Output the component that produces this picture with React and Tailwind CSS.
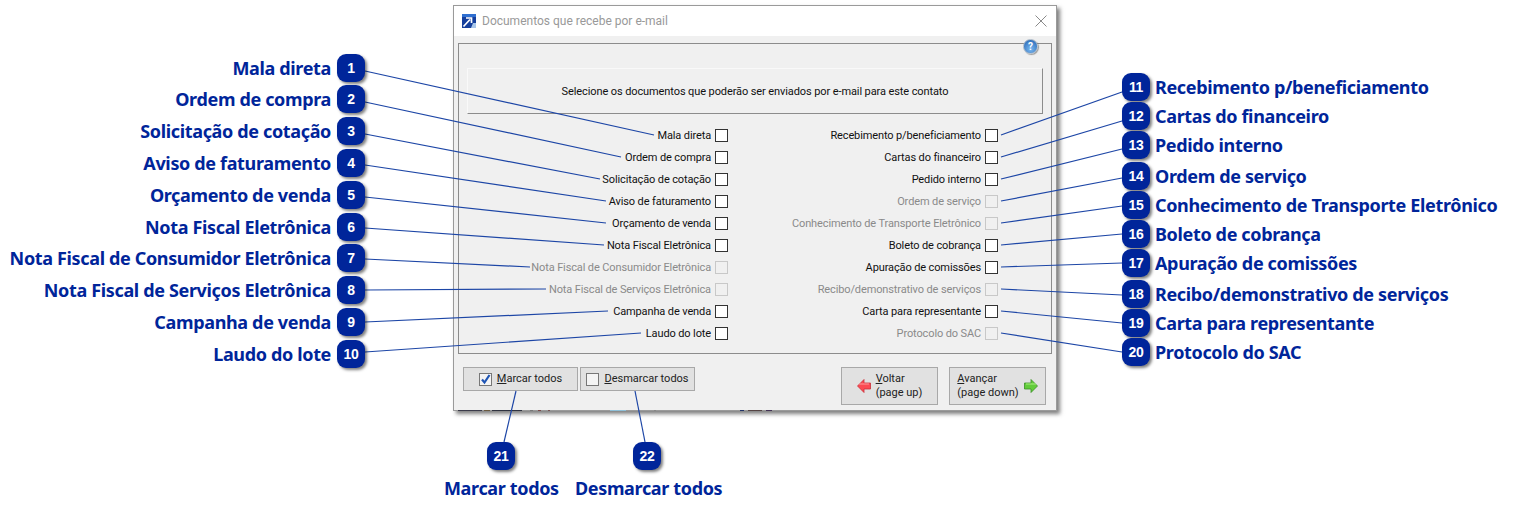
const leftCol = [
  { label: 'Mala direta' },
  { label: 'Ordem de compra' },
  { label: 'Solicitação de cotação' },
  { label: 'Aviso de faturamento' },
  { label: 'Orçamento de venda' },
  { label: 'Nota Fiscal Eletrônica' },
  { label: 'Nota Fiscal de Consumidor Eletrônica', disabled: true },
  { label: 'Nota Fiscal de Serviços Eletrônica', disabled: true },
  { label: 'Campanha de venda' },
  { label: 'Laudo do lote' },
]

const rightCol = [
  { label: 'Recebimento p/beneficiamento' },
  { label: 'Cartas do financeiro' },
  { label: 'Pedido interno' },
  { label: 'Ordem de serviço', disabled: true },
  { label: 'Conhecimento de Transporte Eletrônico', disabled: true },
  { label: 'Boleto de cobrança' },
  { label: 'Apuração de comissões' },
  { label: 'Recibo/demonstrativo de serviços', disabled: true },
  { label: 'Carta para representante' },
  { label: 'Protocolo do SAC', disabled: true },
]

// callout centers, read off the picture
const leftY = [68, 99, 131, 163, 195, 227, 258, 290, 322, 354]
const rightY = [87, 116, 145, 176, 205, 234, 263, 294, 323, 352]

const lines = [
  [365, 71, 654, 135], [365, 102, 621, 157], [365, 134, 600, 179], [365, 165, 606, 201], [365, 197, 606, 223],
  [365, 228, 604, 245], [365, 259, 530, 267], [365, 290, 546, 289], [365, 322, 608, 311], [365, 352, 641, 333],
  [1001, 135, 1122, 92], [1001, 157, 1122, 121], [1001, 179, 1122, 149], [1001, 201, 1122, 178], [1001, 223, 1122, 206],
  [1001, 245, 1122, 234], [1001, 267, 1122, 263], [1001, 289, 1122, 295], [1001, 311, 1122, 323], [1001, 333, 1122, 352],
  [516, 391, 504, 442], [635, 391, 645, 442],
]

// bits of the window behind the dialog that peek out under its lower edge
const behind = [
  [458, 24, '#3a3a4a'], [484, 6, '#6a5a40'], [492, 30, '#2f3340'], [530, 3, '#777'], [538, 3, '#7a4a4a'], [548, 2, '#775555'],
  [610, 16, '#8fc0d8'], [654, 2, '#888'], [740, 4, '#223366'], [748, 14, '#554444'], [766, 6, '#443355'],
]

function Badge({ n, className }) {
  return (
    <div className={`absolute w-7 h-7 rounded-[9px] bg-[#00259a] text-white flex items-center justify-center text-[14px] font-bold font-['Liberation_Sans',sans-serif] tracking-[-0.3px] shadow-[2px_2px_3px_rgba(0,0,0,0.5)] ${className}`}>
      {n}
    </div>
  )
}

function Row({ label, disabled }) {
  return (
    <div className="h-[22px] flex items-center justify-end gap-[4px]">
      <span className={`pt-[2px] tracking-[-0.12px] ${disabled ? 'text-[#8a8a8a]' : 'text-[#111]'}`}>{label}</span>
      <span className={`w-[13px] h-[13px] border ${disabled ? 'border-[#c8c8c8] bg-[#f0f0f0]' : 'border-[#333] bg-white'}`} />
    </div>
  )
}

function Arrow({ dir }) {
  const fill = dir === 'left' ? '#fb4a52' : '#62cc3a'
  const light = dir === 'left' ? '#ff9a9a' : '#a8ec80'
  const d = dir === 'left' ? 'M0.5 7 L7 0.5 V4 H13.5 V10 H7 V13.5 Z' : 'M13.5 7 L7 0.5 V4 H0.5 V10 H7 V13.5 Z'
  return (
    <svg width="14" height="14" viewBox="0 0 14 14" className="shrink-0">
      <path d={d} fill={fill} stroke={dir === 'left' ? '#c9303a' : '#3a8f26'} strokeWidth="0.8" />
      <path d="M2 5 H12" stroke={light} strokeWidth="1" />
    </svg>
  )
}

export default function App() {
  return (
    <div className="relative w-[1513px] h-[517px] bg-white overflow-hidden font-['Noto_Sans',sans-serif]">
      {/* dialog */}
      <div className="absolute left-[453px] top-[5px] w-[604px] h-[406px] border border-[#9a9a9a] bg-[#f0f0f0] shadow-[3px_3px_4px_rgba(0,0,0,0.5)] text-[11px] font-['Roboto',sans-serif] flex flex-col">
        <div className="h-[30px] bg-white flex items-center pl-[8px] pr-[9px] shrink-0">
          <svg width="14" height="14" viewBox="0 0 14 14" className="shrink-0">
            <rect width="14" height="14" fill="#153f9c" />
            <path d="M0 0 H14 V3 H0 Z" fill="#2f6fd0" />
            <path d="M1.5 12.5 L8 5.5 M4 4 H9.5 V9" stroke="#fff" strokeWidth="1.7" fill="none" />
            <path d="M9 14 L11 9 L14 9 V14 Z" fill="#a8c6ea" />
          </svg>
          <span className="ml-[6px] text-[12px] text-[#999]">Documentos que recebe por e-mail</span>
          <svg width="12" height="12" viewBox="0 0 12 12" className="ml-auto shrink-0">
            <path d="M0.5 0.5 L11.5 11.5 M11.5 0.5 L0.5 11.5" stroke="#8a8a8a" strokeWidth="1" />
          </svg>
        </div>

        <div className="relative mt-[7px] mx-[4px] h-[311px] border border-[#8c8c8c] px-[8px] pt-[24px]">
          <div className="absolute right-[13px] top-[-5px] w-[15px] h-[15px] rounded-full bg-[radial-gradient(circle_at_50%_70%,#7ab8f0,#1f5fb0)] border border-[#aab8c8] shadow-[1px_1px_1px_rgba(0,0,0,0.35)] text-white text-[10px] font-bold flex items-center justify-center">?</div>
          <div className="h-[46px] pt-[2px] border border-[#f9f9f9] border-b-[#8c8c8c] border-r-[#8c8c8c] flex items-center justify-center text-[#111] tracking-[-0.1px]">
            Selecione os documentos que poderão ser enviados por e-mail para este contato
          </div>
          <div className="grid grid-cols-[261px_270px] mt-[10px]">
            <div>{leftCol.map((r) => <Row key={r.label} {...r} />)}</div>
            <div>{rightCol.map((r) => <Row key={r.label} {...r} />)}</div>
          </div>
        </div>

        <div className="flex items-start mt-[13px] ml-[9px] text-[#222]">
          <button className="w-[115px] h-[24px] border border-[#a8a8a8] bg-[#e1e1e1] flex items-center justify-center gap-[5px]">
            <svg width="13" height="13" viewBox="0 0 13 13" className="shrink-0">
              <rect x="0.5" y="0.5" width="12" height="12" fill="#f4f4f4" stroke="#777" />
              <path d="M3 6.5 L5.5 9.5 L10.5 2" stroke="#1f55b5" strokeWidth="2.2" fill="none" />
            </svg>
            <span><u>M</u>arcar todos</span>
          </button>
          <button className="ml-[2px] w-[115px] h-[24px] border border-[#a8a8a8] bg-[#e1e1e1] flex items-center justify-center gap-[5px]">
            <span className="w-[13px] h-[13px] border border-[#777] bg-[#f4f4f4]" />
            <span><u>D</u>esmarcar todos</span>
          </button>
          <button className="ml-[146px] w-[97px] h-[38px] border border-[#a8a8a8] bg-[#e1e1e1] flex items-center justify-center gap-[5px]">
            <Arrow dir="left" />
            <span className="text-left leading-[14px]"><u>V</u>oltar<br />(page up)</span>
          </button>
          <button className="ml-[11px] w-[97px] h-[38px] border border-[#a8a8a8] bg-[#e1e1e1] flex items-center justify-center gap-[5px]">
            <span className="text-left leading-[14px]"><u>A</u>vançar<br />(page down)</span>
            <Arrow dir="right" />
          </button>
        </div>
      </div>

      {/* connector lines */}
      <svg className="absolute inset-0" width="1513" height="517">
        {behind.map(([x, w, c]) => <rect key={x} x={x} y={410} width={w} height={1} fill={c} />)}
        {lines.map(([x1, y1, x2, y2]) => (
          <line key={`${x1}-${y1}`} x1={x1} y1={y1} x2={x2} y2={y2} stroke="#1d46a6" strokeWidth="1.2" />
        ))}
      </svg>

      {/* callouts */}
      <div className="text-[18px] font-bold text-[#00259a] leading-none tracking-[-0.35px]">
        {leftCol.map((r, i) => (
          <div key={r.label}>
            <span className="absolute right-[1182px] whitespace-nowrap leading-[24px]" style={{ top: leftY[i] - 12 }}>{r.label}</span>
            <div className="absolute left-0" style={{ top: leftY[i] - 14 }}><Badge n={i + 1} className="left-[337px]" /></div>
          </div>
        ))}
        {rightCol.map((r, i) => (
          <div key={r.label}>
            <span className="absolute left-[1155px] whitespace-nowrap leading-[24px]" style={{ top: rightY[i] - 12 }}>{r.label}</span>
            <div className="absolute left-0" style={{ top: rightY[i] - 14 }}><Badge n={i + 11} className="left-[1122px]" /></div>
          </div>
        ))}
        <Badge n={21} className="left-[487px] top-[442px]" />
        <Badge n={22} className="left-[633px] top-[442px]" />
        <span className="absolute left-[444px] top-[476px] leading-[24px] whitespace-nowrap">Marcar todos</span>
        <span className="absolute left-[575px] top-[476px] leading-[24px] whitespace-nowrap">Desmarcar todos</span>
      </div>
    </div>
  )
}
